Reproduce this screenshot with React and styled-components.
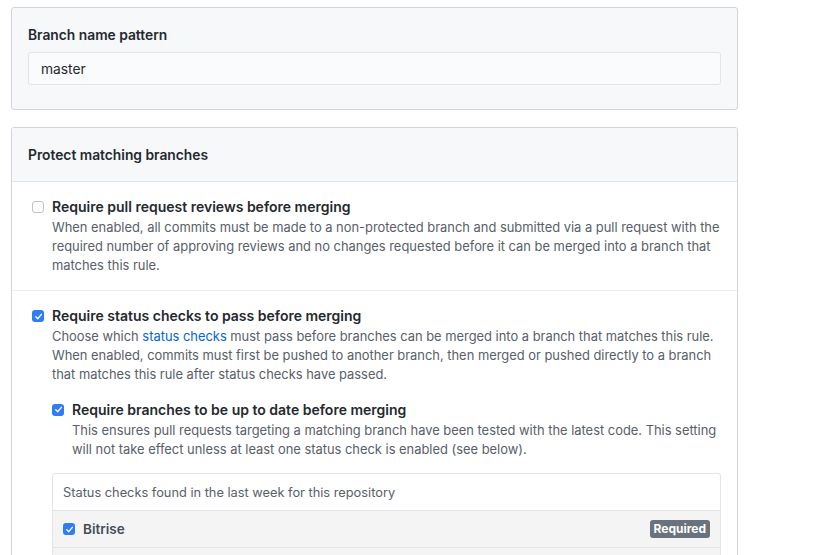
import React from "react";
import styled, { createGlobalStyle } from "styled-components";

const GlobalStyle = createGlobalStyle`
  html, body {
    margin: 0;
    padding: 0;
    background: #fff;
  }
  body {
    font-family: Inter, "Noto Sans", sans-serif;
    color: #24292e;
    -webkit-font-smoothing: antialiased;
  }
`;

const Page = styled.div`
  width: 727px;
  padding: 7px 0 0 11px;
  display: flex;
  flex-direction: column;
  gap: 17px;
`;

const Box = styled.div`
  border: 1px solid #d1d5da;
  border-radius: 3px;
  background: ${(p) => (p.gray ? "#f6f8fa" : "#fff")};
  overflow: hidden;
`;

const PatternBody = styled.div`
  padding: 18px 16px 24px 16px;
  display: flex;
  flex-direction: column;
  gap: 8px;
`;

const Label = styled.label`
  font-size: 13.8px;
  font-weight: 600;
  line-height: 18px;
`;

const TextInput = styled.input`
  height: 33px;
  box-sizing: border-box;
  width: 100%;
  padding: 0 12px;
  font-family: inherit;
  font-size: 13.8px;
  color: #24292e;
  background: #fafbfc;
  border: 1px solid #e1e4e8;
  border-radius: 3px;
  outline: none;
`;

const BoxHeader = styled.div`
  background: #f6f8fa;
  border-bottom: 1px solid #e1e4e8;
  height: 53px;
  padding: 0 16px;
  display: flex;
  align-items: center;
  font-size: 13.8px;
  font-weight: 600;
`;

const Option = styled.div`
  display: flex;
  gap: 8px;
  padding: ${(p) => (p.nested ? "0" : "14px 16px 15px 20px")};
  border-top: ${(p) => (p.first || p.nested ? "none" : "1px solid #eaecef")};
  margin-top: ${(p) => (p.nested ? "14px" : "0")};
`;

const OptionBody = styled.div`
  flex: 1;
  display: flex;
  flex-direction: column;
`;

const Title = styled.div`
  font-size: 14px;
  font-weight: 600;
  line-height: 22px;
`;

const Note = styled.div`
  margin-top: 1px;
  font-size: 12.9px;
  line-height: 18.8px;
  color: #586069;
`;

const Link = styled.a`
  color: #0366d6;
  text-decoration: none;
`;

const CheckMark = styled.span`
  flex: none;
  width: 12px;
  height: 12px;
  margin-top: ${(p) => (p.inRow ? "0" : "5px")};
  box-sizing: border-box;
  border-radius: 3px;
  border: ${(p) => (p.checked ? "none" : "1px solid #c4c4c4")};
  background: ${(p) => (p.checked ? "#2f7df6" : "#fff")};
  display: flex;
  align-items: center;
  justify-content: center;
`;

const Checkbox = ({ checked, inRow }) => (
  <CheckMark checked={checked} inRow={inRow}>
    {checked && (
      <svg width="9" height="9" viewBox="0 0 10 10">
        <path d="M2 5.3 L4.2 7.4 L8.2 2.6" fill="none" stroke="#fff" strokeWidth="1.6" strokeLinecap="round" strokeLinejoin="round" />
      </svg>
    )}
  </CheckMark>
);

const ChecksBox = styled.div`
  margin-top: 14px;
  border: 1px solid #e1e4e8;
  border-radius: 3px;
  overflow: hidden;
`;

const ChecksHeader = styled.div`
  height: 36px;
  padding: 0 10px;
  display: flex;
  align-items: center;
  font-size: 12.8px;
  color: #586069;
  border-bottom: 1px solid #e1e4e8;
`;

const CheckRow = styled.div`
  height: 36px;
  padding: 0 10px;
  display: flex;
  align-items: center;
  gap: 8px;
  background: #f4f4f4;
  border-bottom: 1px solid #e1e4e8;
`;

const CheckName = styled.span`
  flex: 1;
  font-size: 13.5px;
  font-weight: 600;
  color: #444d56;
`;

const Badge = styled.span`
  background: #6a737d;
  color: #fff;
  font-size: 12px;
  font-weight: 700;
  line-height: 18px;
  padding: 0 4px;
  border-radius: 3px;
`;

export default function App() {
  return (
    <>
      <GlobalStyle />
      <Page>
        <Box gray>
          <PatternBody>
            <Label>Branch name pattern</Label>
            <TextInput defaultValue="master" />
          </PatternBody>
        </Box>
        <Box>
          <BoxHeader>Protect matching branches</BoxHeader>
          <Option first>
            <Checkbox />
            <OptionBody>
              <Title>Require pull request reviews before merging</Title>
              <Note>
                When enabled, all commits must be made to a non-protected branch and submitted via a pull request with the
                required number of approving reviews and no changes requested before it can be merged into a branch that
                matches this rule.
              </Note>
            </OptionBody>
          </Option>
          <Option>
            <Checkbox checked />
            <OptionBody>
              <Title>Require status checks to pass before merging</Title>
              <Note>
                Choose which <Link href="#">status checks</Link> must pass before branches can be merged into a branch that matches this rule.
                When enabled, commits must first be pushed to another branch, then merged or pushed directly to a branch
                that matches this rule after status checks have passed.
              </Note>
              <Option nested>
                <Checkbox checked />
                <OptionBody>
                  <Title>Require branches to be up to date before merging</Title>
                  <Note>
                    This ensures pull requests targeting a matching branch have been tested with the latest code. This setting
                    will not take effect unless at least one status check is enabled (see below).
                  </Note>
                </OptionBody>
              </Option>
              <ChecksBox>
                <ChecksHeader>Status checks found in the last week for this repository</ChecksHeader>
                <CheckRow>
                  <Checkbox checked inRow />
                  <CheckName>Bitrise</CheckName>
                  <Badge>Required</Badge>
                </CheckRow>
                <CheckRow>
                  <Checkbox checked inRow />
                  <CheckName>ci/circleci</CheckName>
                </CheckRow>
              </ChecksBox>
            </OptionBody>
          </Option>
        </Box>
      </Page>
    </>
  );
}
